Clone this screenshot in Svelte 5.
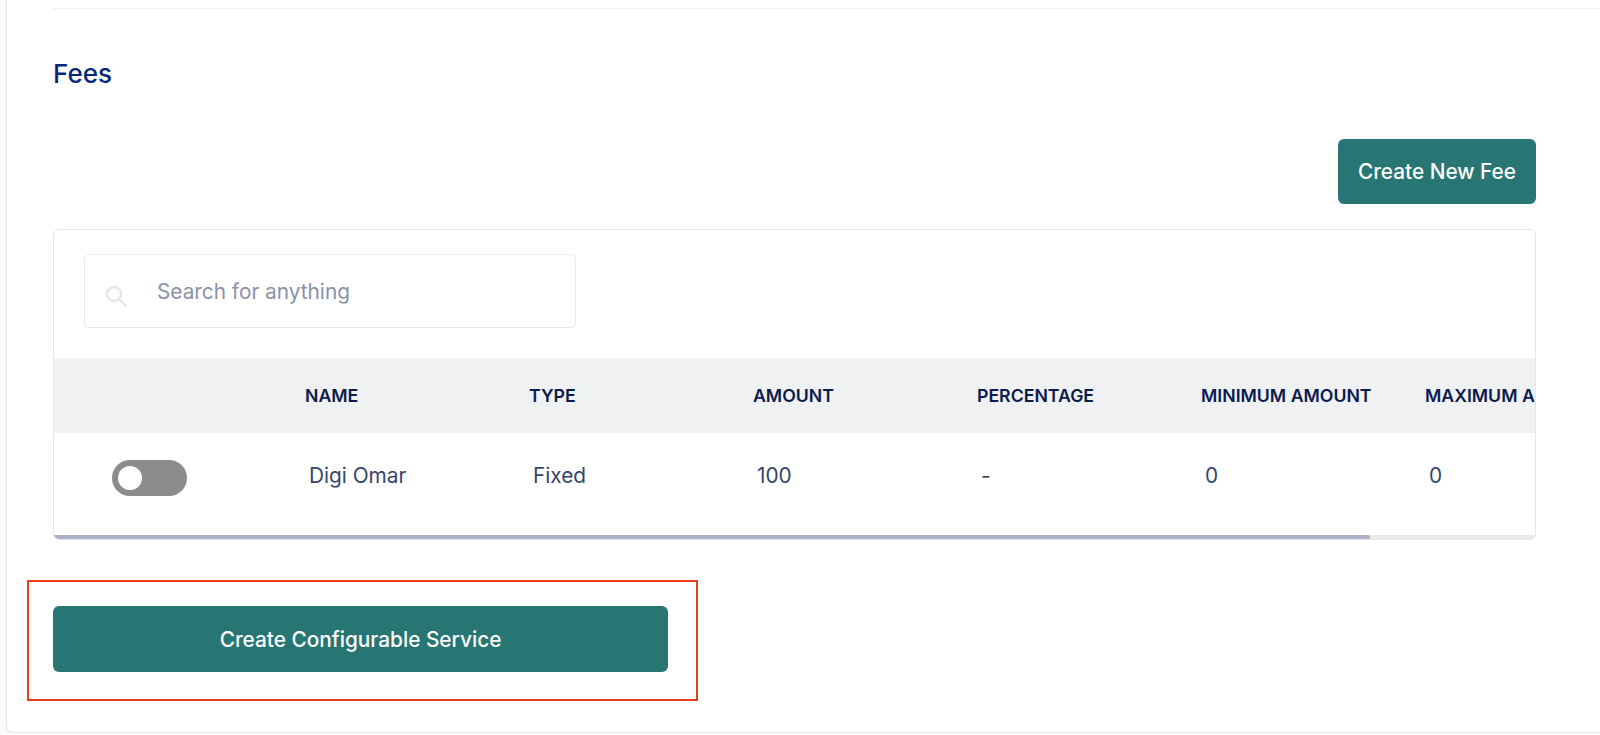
<script>
  const cols = ['NAME', 'TYPE', 'AMOUNT', 'PERCENTAGE', 'MINIMUM AMOUNT', 'MAXIMUM AMOUNT'];
  const row = ['Digi Omar', 'Fixed', '100', '-', '0', '0'];
</script>

<div class="panel">
  <hr class="rule" />
  <h2 class="title">Fees</h2>
  <div class="actions">
    <button class="btn new-fee">Create New Fee</button>
  </div>
  <div class="card">
    <div class="search">
      <svg class="search-icon" width="24" height="24" viewBox="0 0 24 24" fill="none" stroke="#e4e6eb" stroke-width="2.4" stroke-linecap="round">
        <circle cx="10" cy="10" r="7" />
        <path d="M15.5 15.5 L22 22" />
      </svg>
      <span class="placeholder">Search for anything</span>
    </div>
    <div class="table">
      <div class="tr head">
        <div class="first"></div>
        {#each cols as c}
          <div class="th">{c}</div>
        {/each}
      </div>
      <div class="tr body">
        <div class="first">
          <span class="toggle"><span class="knob"></span></span>
        </div>
        {#each row as v}
          <div class="td">{v}</div>
        {/each}
      </div>
    </div>
    <div class="track"><div class="thumb"></div></div>
  </div>
  <div class="highlight">
    <button class="btn submit">Create Configurable Service</button>
  </div>
</div>

<style>
  :global(body) {
    margin: 0;
    background: #fbfbfb;
    overflow: hidden;
    font-family: Inter, "Liberation Sans", sans-serif;
  }
  .panel {
    box-sizing: border-box;
    height: 733px;
    margin-left: 6px;
    padding: 8px 0 0 46px;
    background: #fff;
    border: 1px solid #e5e5e5;
    border-top: 0;
    border-right: 0;
    border-bottom-left-radius: 6px;
  }
  .rule {
    margin: 0;
    border: 0;
    height: 1px;
    background: #eeeff3;
  }
  .title {
    margin: 48px 0 0;
    font-size: 26px;
    line-height: 34px;
    font-weight: 500;
    color: #04277c;
  }
  .actions {
    width: 1483px;
    margin-top: 48px;
    display: flex;
    justify-content: flex-end;
  }
  .btn {
    border: 0;
    border-radius: 6px;
    background: #277674;
    color: #fff;
    font-family: inherit;
    font-size: 20.8px;
    font-weight: 550;
    height: 65px;
    padding: 0;
  }
  .new-fee {
    width: 198px;
  }
  .card {
    box-sizing: border-box;
    width: 1483px;
    height: 311px;
    margin-top: 25px;
    border: 1px solid #e6e6e6;
    border-radius: 6px;
    overflow: hidden;
    background: #fff;
  }
  .search {
    box-sizing: border-box;
    width: 492px;
    height: 74px;
    margin: 24px 0 0 30px;
    border: 1px solid #e8e9ee;
    border-radius: 5px;
    display: flex;
    align-items: center;
    padding-left: 19px;
  }
  .search-icon {
    flex: none;
    margin-top: 9px;
  }
  .placeholder {
    margin-left: 29px;
    font-size: 20.8px;
    color: #8a91a8;
  }
  .table {
    margin-top: 30px;
    overflow: hidden;
  }
  .tr {
    display: grid;
    grid-template-columns: 251px repeat(6, 224px);
    align-items: center;
  }
  .head {
    height: 75px;
    background: #f0f1f3;
  }
  .th {
    font-size: 17.7px;
    font-weight: 600;
    color: #0b1b4d;
    white-space: nowrap;
  }
  .body {
    height: 102px;
  }
  .first {
    padding-left: 58px;
  }
  .body .first {
    padding-bottom: 12px;
  }
  .td {
    padding-left: 4px;
    padding-bottom: 18px;
    font-size: 20.8px;
    color: #34466b;
  }
  .toggle {
    box-sizing: border-box;
    display: flex;
    align-items: center;
    width: 75px;
    height: 36px;
    padding-left: 6px;
    border-radius: 18px;
    background: #8c8c8c;
  }
  .knob {
    width: 24px;
    height: 24px;
    border-radius: 50%;
    background: #fff;
  }
  .track {
    height: 5px;
    background: #e9e9e9;
  }
  .thumb {
    width: 1316px;
    height: 100%;
    border-radius: 0 2px 2px 0;
    background: #adb3c6;
  }
  .highlight {
    box-sizing: border-box;
    width: 671px;
    height: 121px;
    margin: 40px 0 0 -26px;
    padding: 24px 0 0 24px;
    border: 2px solid #ee3a1f;
  }
  .submit {
    width: 615px;
    height: 66px;
  }
</style>
